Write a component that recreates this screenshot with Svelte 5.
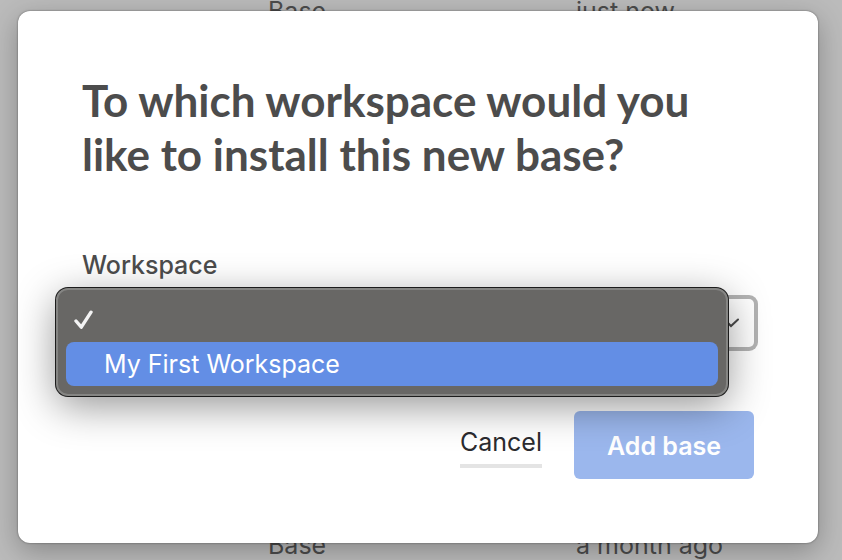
<script>
  const rows = [
    { type: 'Base', opened: 'just now' },
    { type: 'Base', opened: 'a month ago' }
  ];
  const workspaces = ['', 'My First Workspace'];
  let selected = $state('');
  let highlighted = $state('My First Workspace');
</script>

<main>
  <div class="backdrop">
    {#each rows as row}
      <div class="row"><span>{row.type}</span><span>{row.opened}</span></div>
    {/each}
  </div>

  <div class="dialog" role="dialog" aria-modal="true" aria-labelledby="title">
    <h1 id="title">To which workspace would you like to install this new base?</h1>

    <label for="workspace">Workspace</label>
    <div class="field">
      <select id="workspace" bind:value={selected}>
        {#each workspaces as name}
          <option value={name}>{name}</option>
        {/each}
      </select>
      <svg class="chevron" viewBox="0 0 16 10" aria-hidden="true">
        <path d="M1 2 L7 8 L14 1.5" />
      </svg>
      <div class="menu" role="listbox" aria-label="Workspace">
        {#each workspaces as name}
          <button
            type="button"
            role="option"
            aria-label={name || 'None'}
            aria-selected={name === selected}
            class:active={name === highlighted}
            onmouseenter={() => (highlighted = name)}
            onclick={() => (selected = name)}
          >
            <span class="tick">
              {#if name === selected}
                <svg viewBox="0 0 20 20" aria-hidden="true"><path d="M2 11 L7.3 17.2 L17 2.2" /></svg>
              {/if}
            </span>
            {name}
          </button>
        {/each}
      </div>
    </div>

    <div class="actions">
      <button type="button" class="cancel">Cancel</button>
      <button type="button" class="add">Add base</button>
    </div>
  </div>
</main>

<style>
  :global(body) {
    margin: 0;
    background: #bbb;
  }
  main {
    position: relative;
    box-sizing: border-box;
    min-height: 100vh;
    padding: 11px 24px 17px 18px;
    overflow: hidden;
    font-family: Inter, 'Liberation Sans', sans-serif;
    font-size: 25px;
  }
  .backdrop {
    position: absolute;
    inset: -6px 0 -2px;
    display: flex;
    flex-direction: column;
    justify-content: space-between;
    color: #4c4c4c;
    line-height: 34px;
  }
  .row {
    display: grid;
    grid-template-columns: 308px 1fr;
    padding-left: 268px;
  }
  .dialog {
    position: relative;
    box-sizing: border-box;
    padding: 62px 64px 64px;
    border-radius: 12px;
    background: #fff;
    box-shadow: 0 0 2px rgba(0, 0, 0, 0.5), 0 8px 28px rgba(0, 0, 0, 0.28);
  }
  h1 {
    margin: 0 0 68px;
    color: #4c4c4c;
    font-family: Lato, sans-serif;
    font-size: 44px;
    font-weight: 700;
    line-height: 54px;
  }
  label {
    display: block;
    margin-bottom: 18px;
    color: #4c4c4c;
    font-weight: 500;
    line-height: 32px;
  }
  .field {
    position: relative;
    margin-bottom: 64px;
  }
  select {
    display: block;
    width: 100%;
    height: 48px;
    padding: 0 40px 0 16px;
    appearance: none;
    border: 0;
    border-radius: 5px;
    outline: 0;
    background: #fff;
    box-shadow: 0 0 0 4px #b3b3b3;
    color: #333;
    font: inherit;
  }
  .chevron {
    position: absolute;
    top: 19px;
    right: 14px;
    width: 16px;
    height: 10px;
    pointer-events: none;
  }
  .chevron path {
    fill: none;
    stroke: #4c4c4c;
    stroke-width: 2;
    stroke-linecap: round;
  }
  .menu {
    position: absolute;
    top: -11px;
    right: 26px;
    left: -26px;
    padding: 8px;
    border: 2px solid #858583;
    border-radius: 12px;
    background: #686765;
    box-shadow: 0 0 0 1px #1c1c1c, 0 10px 40px rgba(0, 0, 0, 0.42);
  }
  .menu button {
    display: flex;
    align-items: center;
    width: 100%;
    height: 44px;
    padding: 0 8px;
    border: 0;
    border-radius: 8px;
    background: none;
    color: #fff;
    font: inherit;
    text-align: left;
  }
  .menu button.active {
    background: #638ee5;
  }
  .tick {
    flex: none;
    width: 30px;
    height: 20px;
  }
  .tick svg {
    display: block;
    width: 20px;
    height: 20px;
  }
  .tick path {
    fill: none;
    stroke: #f3f3f3;
    stroke-width: 3.4;
    stroke-linecap: round;
    stroke-linejoin: round;
  }
  .actions {
    display: flex;
    align-items: center;
    justify-content: flex-end;
    gap: 32px;
  }
  .actions button {
    border: 0;
    font: inherit;
  }
  .actions .cancel {
    padding: 0 0 6px;
    background: none;
    box-shadow: 0 4px #e4e4e4;
    color: #2b2b2f;
    line-height: 32px;
  }
  .actions .add {
    min-width: 180px;
    height: 68px;
    padding: 2px 32px 0;
    border-radius: 6px;
    background: rgba(45, 105, 218, 0.48);
    color: #fff;
    font-weight: 600;
  }
</style>
